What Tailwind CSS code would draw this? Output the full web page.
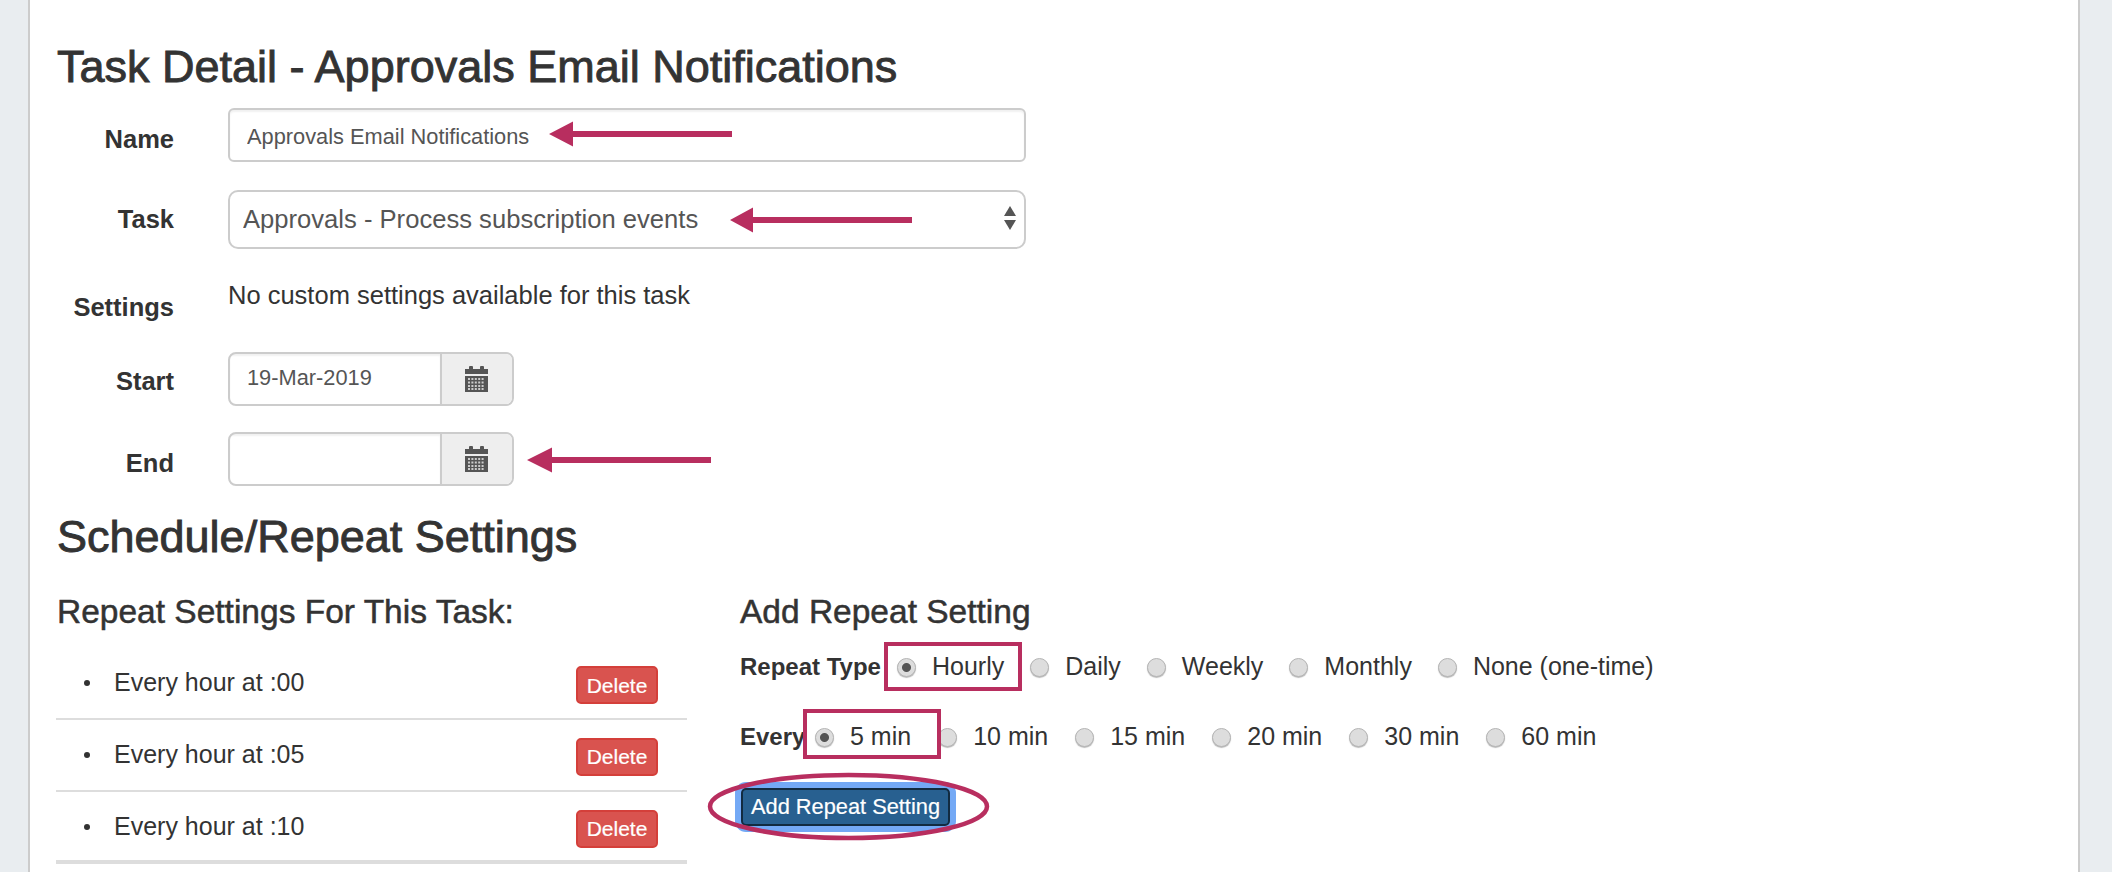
<!DOCTYPE html>
<html lang="en">
<head>
    <meta charset="UTF-8">
    <title>Task Detail - Approvals Email Notifications</title>
    <script src="https://cdn.jsdelivr.net/npm/@tailwindcss/browser@4"></script>
</head>
<body class="h-[872px] overflow-hidden bg-[#e9edf0] font-['Liberation_Sans',Arial,sans-serif] text-[#333]">
    <div class="relative h-[872px]">
        <!-- Main panel -->
        <main class="ml-[28px] mr-[32px] h-[872px] border-x-2 border-[#ccc] bg-white pl-[27px]">
            <h1 class="pt-[44px] h-[90px] text-[45px] leading-[46px] [-webkit-text-stroke:0.9px_#333]">Task Detail - Approvals Email Notifications</h1>

            <!-- Task form -->
            <div class="mt-[18px] flex h-[54px]">
                <label class="w-[117px] pt-[17px] text-right text-[25.500px] leading-[28px] font-bold">Name</label>
                <input type="text" value="Approvals Email Notifications" class="ml-[54px] h-[54px] w-[798px] rounded-[6px] border-2 border-[#ccc] pl-[17px] pt-[4px] text-[21.800px] text-[#555] shadow-[inset_0_2px_2px_rgba(0,0,0,0.06)]">
            </div>
            <div class="mt-[28px] flex h-[59px]">
                <label class="w-[117px] pt-[15px] text-right text-[25.500px] leading-[28px] font-bold">Task</label>
                <div class="relative ml-[54px] h-[59px] w-[798px]">
                    <select class="h-[59px] w-full appearance-none rounded-[10px] border-2 border-[#ccc] bg-white pl-[13px] text-[25.600px] text-[#555]">
                        <option>Approvals - Process subscription events</option>
                    </select>
                    <svg class="absolute top-[16px] right-[10px]" width="12" height="24" viewBox="0 0 12 24" fill="#555">
                        <path d="M6 0 12 10H0z"/><path d="M0 14H12L6 24z"/>
                    </svg>
                </div>
            </div>
            <div class="flex h-[103px]">
                <label class="w-[117px] pt-[44px] text-right text-[25.500px] leading-[28px] font-bold">Settings</label>
                <p class="ml-[54px] pt-[32px] text-[25.500px] leading-[28px]">No custom settings available for this task</p>
            </div>
            <div class="flex h-[54px]">
                <label class="w-[117px] pt-[15px] text-right text-[25.500px] leading-[28px] font-bold">Start</label>
                <div class="ml-[54px] flex h-[54px] w-[286px] overflow-hidden rounded-[8px] border-2 border-[#ccc]">
                    <input type="text" value="19-Mar-2019" class="w-[212px] border-r-2 border-[#ccc] pl-[17px] pb-[2px] text-[21.800px] text-[#555] shadow-[inset_0_2px_2px_rgba(0,0,0,0.06)]">
                    <div class="flex flex-1 items-center justify-center bg-[#eee] pr-[2px]">
                        <svg width="23" height="26" viewBox="0 0 23 26">
                            <path fill="#555" d="M0 3H4V1Q4 0 5 0H7Q8 0 8 1V3H15V1Q15 0 16 0H18Q19 0 19 1V3H23V8H0z"/>
                            <path fill="#555" d="M0 10H23V26H0z"/>
                            <path stroke="#ccc" stroke-width="2" stroke-dasharray="2 1.400" d="M3 13H20M3 16.500H20M3 20H20M3 23H20"/>
                        </svg>
                    </div>
                </div>
            </div>
            <div class="mt-[26px] flex h-[54px]">
                <label class="w-[117px] pt-[17px] text-right text-[25.500px] leading-[28px] font-bold">End</label>
                <div class="ml-[54px] flex h-[54px] w-[286px] overflow-hidden rounded-[8px] border-2 border-[#ccc]">
                    <input type="text" class="w-[212px] border-r-2 border-[#ccc] pl-[17px] text-[21.800px] text-[#555] shadow-[inset_0_2px_2px_rgba(0,0,0,0.06)]">
                    <div class="flex flex-1 items-center justify-center bg-[#eee] pr-[2px]">
                        <svg width="23" height="26" viewBox="0 0 23 26">
                            <path fill="#555" d="M0 3H4V1Q4 0 5 0H7Q8 0 8 1V3H15V1Q15 0 16 0H18Q19 0 19 1V3H23V8H0z"/>
                            <path fill="#555" d="M0 10H23V26H0z"/>
                            <path stroke="#ccc" stroke-width="2" stroke-dasharray="2 1.400" d="M3 13H20M3 16.500H20M3 20H20M3 23H20"/>
                        </svg>
                    </div>
                </div>
            </div>

            <h2 class="mt-[28px] h-[46px] text-[45px] leading-[46px] [-webkit-text-stroke:0.9px_#333]">Schedule/Repeat Settings</h2>

            <!-- Repeat settings -->
            <div class="mt-[34px] flex">
                <section class="w-[630px]">
                    <h3 class="h-[36px] text-[33.500px] leading-[36px] [-webkit-text-stroke:0.5px_#333]">Repeat Settings For This Task:</h3>
                    <ul class="mt-[36px] -ml-[1px]">
                        <li class="flex h-[54px] items-start justify-between border-b-2 border-[#ddd]">
                            <span class="-mt-[2px] flex h-[38px] items-center pl-[28px] text-[25px]"><span class="mr-[24px] size-[6px] rounded-full bg-[#333]"></span>Every hour at :00</span>
                            <button class="mr-[29px] h-[38px] w-[82px] rounded-[5px] border-2 border-[#d43f3a] bg-[#d9534f] pt-[2px] text-[21px] text-white [-webkit-text-stroke:0.2px_#fff]">Delete</button>
                        </li>
                        <li class="mt-[18px] flex h-[54px] items-start justify-between border-b-2 border-[#ddd]">
                            <span class="-mt-[2px] flex h-[38px] items-center pl-[28px] text-[25px]"><span class="mr-[24px] size-[6px] rounded-full bg-[#333]"></span>Every hour at :05</span>
                            <button class="mr-[29px] h-[38px] w-[82px] rounded-[5px] border-2 border-[#d43f3a] bg-[#d9534f] text-[21px] text-white [-webkit-text-stroke:0.2px_#fff]">Delete</button>
                        </li>
                        <li class="mt-[18px] flex h-[54px] items-start justify-between border-b-4 border-[#ddd]">
                            <span class="-mt-[2px] flex h-[38px] items-center pl-[28px] text-[25px]"><span class="mr-[24px] size-[6px] rounded-full bg-[#333]"></span>Every hour at :10</span>
                            <button class="mr-[29px] h-[38px] w-[82px] rounded-[5px] border-2 border-[#d43f3a] bg-[#d9534f] text-[21px] text-white [-webkit-text-stroke:0.2px_#fff]">Delete</button>
                        </li>
                    </ul>
                </section>

                <section class="ml-[53px]">
                    <h3 class="h-[36px] text-[33.500px] leading-[36px] [-webkit-text-stroke:0.5px_#333]">Add Repeat Setting</h3>
                    <div class="mt-[22px] flex h-[30px] items-center text-[25px]">
                        <span class="w-[157px] text-[24px] font-bold whitespace-nowrap">Repeat Type</span>
                        <div class="flex items-center gap-[26px]">
                            <label class="flex items-center gap-[16px]"><input type="radio" name="type" checked class="size-[19px] appearance-none rounded-full border border-[#b5b5b5] bg-[#ddd] shadow-[0_1px_1px_#bbb] checked:bg-[radial-gradient(circle,#555_4px,#ddd_5px)]">Hourly</label>
                            <label class="flex items-center gap-[16px]"><input type="radio" name="type" class="size-[19px] appearance-none rounded-full border border-[#b5b5b5] bg-[#ddd] shadow-[0_1px_1px_#bbb]">Daily</label>
                            <label class="flex items-center gap-[16px]"><input type="radio" name="type" class="size-[19px] appearance-none rounded-full border border-[#b5b5b5] bg-[#ddd] shadow-[0_1px_1px_#bbb]">Weekly</label>
                            <label class="flex items-center gap-[16px]"><input type="radio" name="type" class="size-[19px] appearance-none rounded-full border border-[#b5b5b5] bg-[#ddd] shadow-[0_1px_1px_#bbb]">Monthly</label>
                            <label class="flex items-center gap-[16px]"><input type="radio" name="type" class="size-[19px] appearance-none rounded-full border border-[#b5b5b5] bg-[#ddd] shadow-[0_1px_1px_#bbb]">None (one-time)</label>
                        </div>
                    </div>
                    <div class="mt-[40px] flex h-[30px] items-center text-[25px]">
                        <span class="w-[75px] text-[24px] font-bold">Every</span>
                        <div class="flex items-center gap-[27px]">
                            <label class="flex items-center gap-[16px]"><input type="radio" name="every" checked class="size-[19px] appearance-none rounded-full border border-[#b5b5b5] bg-[#ddd] shadow-[0_1px_1px_#bbb] checked:bg-[radial-gradient(circle,#555_4px,#ddd_5px)]">5 min</label>
                            <label class="flex items-center gap-[16px]"><input type="radio" name="every" class="size-[19px] appearance-none rounded-full border border-[#b5b5b5] bg-[#ddd] shadow-[0_1px_1px_#bbb]">10 min</label>
                            <label class="flex items-center gap-[16px]"><input type="radio" name="every" class="size-[19px] appearance-none rounded-full border border-[#b5b5b5] bg-[#ddd] shadow-[0_1px_1px_#bbb]">15 min</label>
                            <label class="flex items-center gap-[16px]"><input type="radio" name="every" class="size-[19px] appearance-none rounded-full border border-[#b5b5b5] bg-[#ddd] shadow-[0_1px_1px_#bbb]">20 min</label>
                            <label class="flex items-center gap-[16px]"><input type="radio" name="every" class="size-[19px] appearance-none rounded-full border border-[#b5b5b5] bg-[#ddd] shadow-[0_1px_1px_#bbb]">30 min</label>
                            <label class="flex items-center gap-[16px]"><input type="radio" name="every" class="size-[19px] appearance-none rounded-full border border-[#b5b5b5] bg-[#ddd] shadow-[0_1px_1px_#bbb]">60 min</label>
                        </div>
                    </div>
                    <button class="mt-[36px] ml-[1px] h-[38px] w-[209px] rounded-[5px] border-2 border-[#122b40] bg-[#286090] text-[21.800px] text-white shadow-[0_0_0_6px_#74a9f5] [-webkit-text-stroke:0.2px_#fff]">Add Repeat Setting</button>
                </section>
            </div>
        </main>

        <!-- Red annotations drawn over the screenshot -->
        <svg class="pointer-events-none absolute inset-0" width="2112" height="872" viewBox="0 0 2112 872" fill="#b82e5f">
            <path d="M549 134 573 121.500V131H732V137H573V146.500z"/>
            <path d="M730 220 753 207.500V217H912V223H753V232.500z"/>
            <path d="M527 460 552 447.500V457H711V463H552V472.500z"/>
            <rect x="886" y="644" width="134" height="45" fill="none" stroke="#b82e5f" stroke-width="4"/>
            <rect x="805" y="711" width="134" height="46" fill="none" stroke="#b82e5f" stroke-width="4"/>
            <ellipse cx="848.500" cy="806.500" rx="138.500" ry="31.500" fill="none" stroke="#b82e5f" stroke-width="4.500"/>
        </svg>
    </div>
</body>
</html>
